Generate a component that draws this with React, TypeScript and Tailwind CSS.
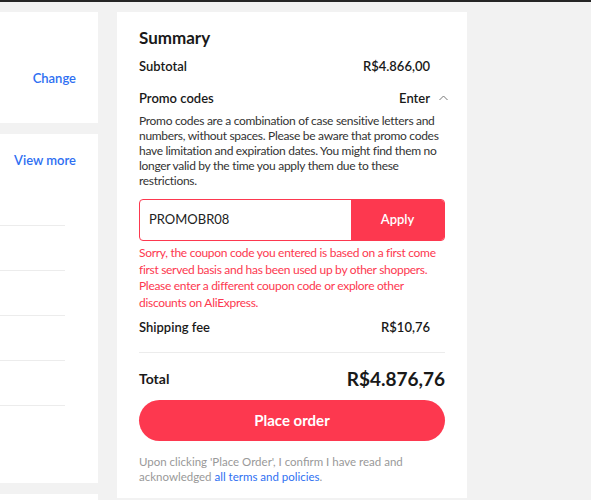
import React from 'react'

const Row = ({ label, value }: { label: string; value: string }) => (
  <div className="flex items-center justify-between pr-[15px] text-[13px] font-semibold text-[#191919]">
    <span>{label}</span>
    <span>{value}</span>
  </div>
)

const App = () => {
  return (
    <div
      className="h-[500px] w-[591px] overflow-hidden border-t-[2px] border-[#262626] bg-[#f2f2f2]"
      style={{ fontFamily: 'Lato, "Open Sans", sans-serif' }}
    >
      <div className="flex pt-[10px]">
        {/* left column */}
        <div className="flex w-[98px] shrink-0 flex-col gap-[11px]">
          <div className="flex h-[111px] items-start justify-end bg-white pr-[22px] pt-[57px]">
            <span className="text-[13px] font-semibold text-[#2e6ff2]">Change</span>
          </div>
          <div className="h-[349px] bg-white">
            <div className="flex h-[54px] items-center justify-end pr-[22px]">
              <span className="text-[13px] font-semibold text-[#2e6ff2]">View more</span>
            </div>
            <div className="h-[37px]" />
            {[0, 1, 2, 3, 4].map((i) => (
              <div key={i} className="h-[45px] w-[65px] border-t border-[#ececec]" />
            ))}
          </div>
          <div className="h-[20px] bg-white" />
        </div>

        {/* summary */}
        <div className="ml-[19px] h-[486px] w-[350px] shrink-0 bg-white px-[22px] pt-[15px]">
          <h2 className="text-[17px] font-bold leading-[22px] text-[#191919]">Summary</h2>
          <div className="mt-[8px]">
            <Row label="Subtotal" value="R$4.866,00" />
          </div>
          <div className="mt-[12px] flex items-center justify-between text-[13px] font-semibold text-[#191919]">
            <span>Promo codes</span>
            <span className="-mr-[3px] flex items-center gap-[9px]">
              Enter
              <svg width="9" height="6" viewBox="0 0 9 6" fill="none">
                <path d="M0.5 5 4.5 1l4 4" stroke="#777" strokeWidth="1" />
              </svg>
            </span>
          </div>
          <p className="mt-[5px] text-[12px] leading-[15px] tracking-[-0.3px] text-[#333]">
            Promo codes are a combination of case sensitive letters and numbers, without spaces. Please be aware that promo
            codes have limitation and expiration dates. You might find them no longer valid by the time you apply them due to
            these restrictions.
          </p>
          <div className="mt-[11px] flex h-[42px] overflow-hidden rounded-[4px] border border-[#fd384f]">
            <div className="flex flex-1 items-center pl-[9px] text-[13px] text-[#222]">PROMOBR08</div>
            <button className="w-[93px] bg-[#fd384f] text-[13px] font-semibold text-white">Apply</button>
          </div>
          <p className="mt-[4px] text-[12px] leading-[16.5px] tracking-[-0.3px] text-[#fd384f]">
            Sorry, the coupon code you entered is based on a first come first served basis and has been used up by other
            shoppers. Please enter a different coupon code or explore other discounts on AliExpress.
          </p>
          <div className="mt-[7px]">
            <Row label="Shipping fee" value="R$10,76" />
          </div>
          <div className="mt-[14px] border-t border-[#ececec]" />
          <div className="mt-[12px] flex items-center justify-between text-[#191919]">
            <span className="text-[14px] font-bold">Total</span>
            <span className="text-[19px] font-bold">R$4.876,76</span>
          </div>
          <button className="mt-[7px] h-[41px] w-full rounded-full bg-[#fd384f] text-[15px] font-bold text-white">
            Place order
          </button>
          <p className="mt-[13px] text-[11.5px] leading-[15px] text-[#999]">
            Upon clicking 'Place Order', I confirm I have read and acknowledged{' '}
            <span className="text-[#2e6ff2]">all terms and policies</span>.
          </p>
        </div>
      </div>
    </div>
  )
}

export default App
